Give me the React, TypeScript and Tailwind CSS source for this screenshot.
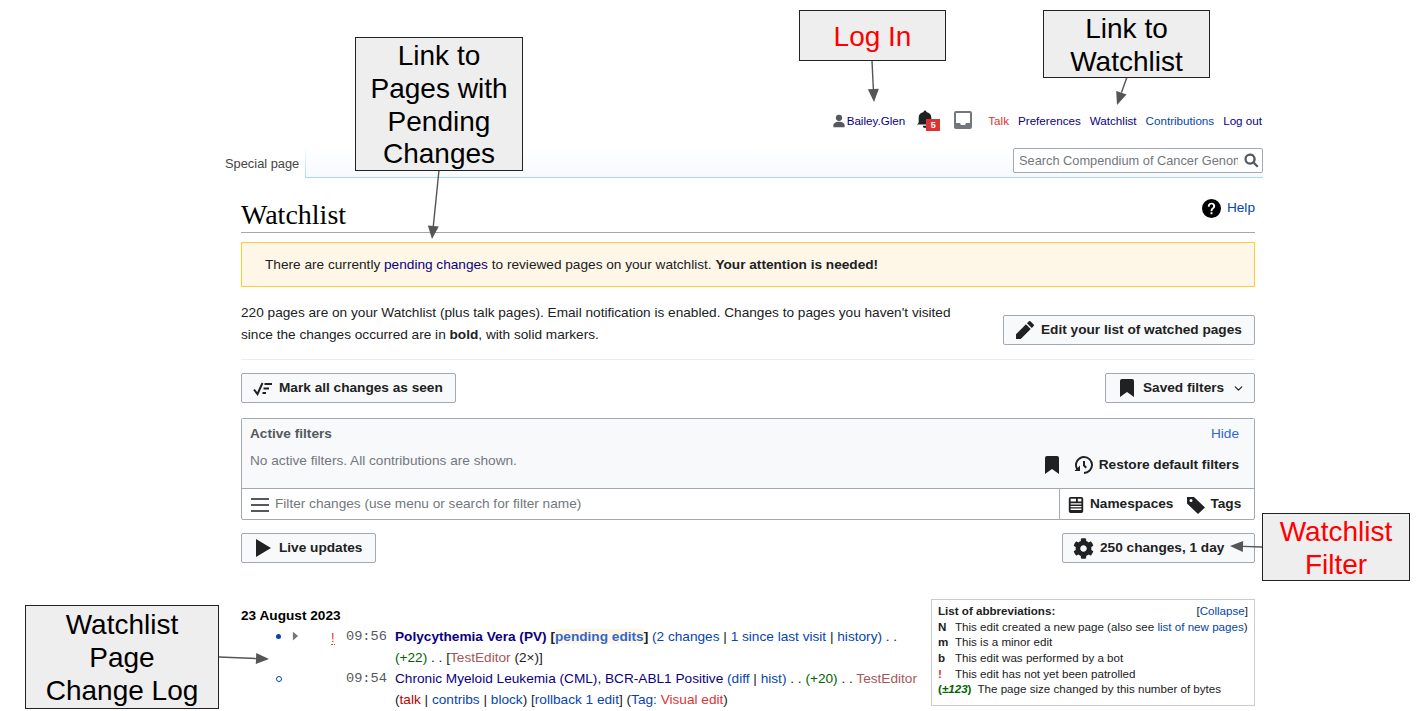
import React from "react";
import { FaCog } from "react-icons/fa";
import { ChevronDown } from "lucide-react";

const Btn = ({ icon, label, className = "" }: { icon: React.ReactNode; label: string; className?: string }) => (
  <div className={`flex h-[30px] items-center rounded-[2px] border border-[#a2a9b1] bg-[#f8f9fa] text-[13.65px] font-bold text-[#202122] ${className}`}>
    {icon}
    <span>{label}</span>
  </div>
);

const Bookmark = ({ c = "" }: { c?: string }) => (
  <svg viewBox="0 0 20 20" className={`h-[20px] w-[20px] fill-[#202122] ${c}`}>
    <path d="M5 1a2 2 0 0 0-2 2v16l7-5 7 5V3a2 2 0 0 0-2-2z" />
  </svg>
);

const Abbr = ({ k, red, children }: { k: string; red?: boolean; children: React.ReactNode }) => (
  <div className="flex h-[15.7px] items-center">
    <span className={`w-[17px] font-bold ${red ? "text-[#dd3333]" : "text-[#202122]"}`}>{k}</span>
    <span>{children}</span>
  </div>
);

const Box = ({ x, y, w, h, red, children }: { x: string; y: string; w: string; h: string; red?: boolean; children: React.ReactNode }) => (
  <div className={`absolute ${x} ${y} ${w} ${h} flex items-center justify-center border border-[#222222] bg-[#eeeeee] pt-[3px] text-center text-[28px] leading-[32.8px] ${red ? "text-[#ff0000]" : "text-black"}`}>
    <div>{children}</div>
  </div>
);

const Arrow = ({ x1, y1, x2, y2 }: { x1: number; y1: number; x2: number; y2: number }) => {
  const a = Math.atan2(y2 - y1, x2 - x1);
  const L = 13, W = 5.5;
  const bx = x2 - L * Math.cos(a), by = y2 - L * Math.sin(a);
  const px = -Math.sin(a) * W, py = Math.cos(a) * W;
  return (
    <g>
      <line x1={x1} y1={y1} x2={bx} y2={by} stroke="#555555" strokeWidth="1.4" />
      <polygon points={`${x2},${y2} ${bx + px},${by + py} ${bx - px},${by - py}`} fill="#555555" />
    </g>
  );
};

const Sep = () => <span className="text-[#202122]"> | </span>;

export default function App() {
  return (
    <div className="relative h-[711px] w-[1416px] overflow-hidden bg-white font-['Liberation_Sans',sans-serif] text-[#202122]">
      {/* personal tools */}
      <div className="flex h-[146px] items-start justify-end pr-[154px] pt-[109px] text-[11.65px] leading-[24px]">
        <div className="flex items-center text-[#0b0080]">
          <svg viewBox="0 0 20 20" className="mr-[1px] h-[14px] w-[14px] fill-[#54595d]">
            <circle cx="10" cy="5.500" r="4.500" />
            <path d="M10 11c-5.900 0-8 3-8 5v3h16v-3c0-2-2.100-5-8-5z" />
          </svg>
          Bailey.Glen
        </div>
        <div className="relative ml-[13px] h-[24px] w-[24px]">
          <svg viewBox="0 0 20 20" className="absolute left-[-2px] top-[1px] h-[18px] w-[18px] fill-[#202122]">
            <path d="M17 13V8c0-3-2.500-5.200-5.500-5.800V2a1.500 1.500 0 0 0-3 0v.2C5.500 2.800 3 5 3 8v5c0 1.500-1 2.500-2 3h18c-1-.5-2-1.500-2-3zM10 20a2.500 2.500 0 0 0 2.500-2.500h-5A2.500 2.500 0 0 0 10 20z" />
          </svg>
          <span className="absolute left-[8px] top-[10px] h-[12px] w-[14px] bg-[#dd3333] text-center text-[9px] font-bold leading-[12px] text-white">5</span>
        </div>
        <svg viewBox="0 0 20 20" className="ml-[11px] mt-[1px] h-[20px] w-[20px] fill-[#72777d]">
          <path fillRule="evenodd" d="M3 1a2 2 0 0 0-2 2v14a2 2 0 0 0 2 2h14a2 2 0 0 0 2-2V3a2 2 0 0 0-2-2zm0 2h14v10h-4l-1 2H8l-1-2H3z" />
        </svg>
        <span className="ml-[15px] text-[#dd3333]">Talk</span>
        <span className="ml-[9px] text-[#0b0080]">Preferences</span>
        <span className="ml-[9px] text-[#0b0080]">Watchlist</span>
        <span className="ml-[9px] text-[#0645ad]">Contributions</span>
        <span className="ml-[9px] text-[#0b0080]">Log out</span>
      </div>

      {/* tab bar */}
      <div className="ml-[225px] flex h-[32px] w-[1038px] items-stretch">
        <div className="w-[80px] pt-[10px] text-[12.85px] leading-[15px] text-[#444444]">Special page</div>
        <div className="w-[1px] bg-gradient-to-b from-white to-[#a7d7f9]" />
        <div className="flex flex-1 justify-end border-b border-[#a7d7f9] bg-gradient-to-b from-white to-[#f7fafc] pt-[2px]">
          <div className="flex h-[25px] w-[250px] items-center justify-between rounded-[2px] border border-[#a2a9b1] bg-white pl-[5px] pr-[3px] text-[12.8px] text-[#72777d]">
            <span className="w-[219px] overflow-hidden whitespace-nowrap">Search Compendium of Cancer Genome</span>
            <svg viewBox="0 0 20 20" className="h-[15px] w-[15px] fill-[#54595d]">
              <path fillRule="evenodd" d="M12.200 14.400a7.500 7.500 0 1 1 2.200-2.200l5 5-2.200 2.200zM3.500 8a4.500 4.500 0 1 0 9 0 4.500 4.500 0 0 0-9 0z" />
            </svg>
          </div>
        </div>
      </div>

      {/* content */}
      <div className="ml-[241px] w-[1014px]">
        <div className="flex h-[55px] justify-between border-b border-[#a2a9b1]">
          <h1 className="pt-[20px] font-['Liberation_Serif',serif] text-[28px] leading-[34px] text-black">Watchlist</h1>
          <div className="mt-[20px] flex h-[20px] items-center text-[13.65px] text-[#0645ad]">
            <svg viewBox="0 0 20 20" className="mr-[6px] h-[19px] w-[19px] fill-black">
              <path d="M10 0a10 10 0 1 0 10 10A10 10 0 0 0 10 0zm1 16H9v-2h2zm2.710-7.600a2.640 2.640 0 0 1-.33.74 3.160 3.160 0 0 1-.48.55l-.54.48c-.21.18-.41.35-.58.52a2.540 2.540 0 0 0-.47.56A2.300 2.300 0 0 0 11 12a3.790 3.790 0 0 0-.11 1H9.080a8.900 8.900 0 0 1 .07-1.250 3.280 3.280 0 0 1 .25-.9 2.790 2.790 0 0 1 .41-.67 4 4 0 0 1 .58-.58c.17-.16.34-.3.51-.44a3 3 0 0 0 .43-.44 1.830 1.830 0 0 0 .3-.55 2 2 0 0 0 .11-.72 2.060 2.060 0 0 0-.17-.86 1.710 1.710 0 0 0-1-.9 1.700 1.700 0 0 0-.5-.1 1.770 1.770 0 0 0-1.530.68 3 3 0 0 0-.5 1.820H6.160a4.740 4.740 0 0 1 .28-1.680 3.560 3.560 0 0 1 .8-1.290 3.880 3.880 0 0 1 1.280-.83A4.590 4.590 0 0 1 10.180 4a4.440 4.440 0 0 1 1.440.23 3.510 3.510 0 0 1 1.150.65 3.080 3.080 0 0 1 .78 1.060 3.540 3.540 0 0 1 .29 1.450 3.390 3.390 0 0 1-.12 1.010z" />
            </svg>
            Help
          </div>
        </div>

        <div className="mt-[9px] flex h-[45px] items-center border border-[#ffcc33] bg-[#fef6e7] pl-[23px] pt-[1px] text-[13.65px] text-[#202122]">
          <span>
            There are currently <span className="text-[#0b0080]">pending changes</span> to reviewed pages on your watchlist. <b>Your attention is needed!</b>
          </span>
        </div>

        <div className="flex h-[73px] items-start justify-between border-b border-[#eaecf0]">
          <p className="mt-[15px] w-[730px] text-[13.65px] leading-[22px]">
            220 pages are on your Watchlist (plus talk pages). Email notification is enabled. Changes to pages you haven't visited since the changes occurred are in <b>bold</b>, with solid markers.
          </p>
          <Btn
            className="mt-[28px] w-[252px] pl-[11px]"
            label="Edit your list of watched pages"
            icon={
              <svg viewBox="0 0 20 20" className="mr-[6px] h-[20px] w-[20px] fill-[#202122]">
                <path d="M16.770 8l1.940-2a1 1 0 0 0 0-1.410l-3.340-3.300a1 1 0 0 0-1.410 0L12 3.230zM1 14.250V19h4.750l9.960-9.960-4.750-4.750z" />
              </svg>
            }
          />
        </div>

        <div className="mt-[13px] flex justify-between">
          <Btn
            className="w-[215px] pl-[11px]"
            label="Mark all changes as seen"
            icon={
              <svg viewBox="0 0 20 20" className="mr-[6px] h-[20px] w-[20px] fill-none stroke-[#202122]" strokeWidth="2">
                <path d="M1 11.500l3.500 4.500L9.500 5" />
                <path d="M11.500 6h7.500M10.500 10.500h5.500M9.500 15h3.500" />
              </svg>
            }
          />
          <Btn className="w-[150px] pl-[11px]" label="Saved filters" icon={<Bookmark c="mr-[6px]" />} />
        </div>
        <div className="relative">
          <ChevronDown className="absolute right-[10px] top-[-21px] h-[13px] w-[13px] text-[#202122]" strokeWidth={2.2} />
        </div>

        <div className="mt-[15px] rounded-[2px] border border-[#a2a9b1]">
          <div className="relative h-[70px] border-b border-[#a2a9b1] bg-[#f8f9fa] pl-[8px] pt-[7px]">
            <div className="text-[13.65px] font-bold leading-[16px] text-[#54595d]">Active filters</div>
            <div className="mt-[11px] text-[13.65px] leading-[16px] text-[#72777d]">No active filters. All contributions are shown.</div>
            <div className="absolute right-[15px] top-[7px] text-[13.65px] leading-[16px] text-[#36c]">Hide</div>
            <div className="absolute bottom-[13px] right-[15px] flex items-center text-[13.65px] font-bold text-[#202122]">
              <Bookmark c="mr-[12px]" />
              <svg viewBox="0 0 20 20" className="mr-[5px] h-[20px] w-[20px] fill-[#202122]">
                <path d="M9 6v5h.06l2.480 2.470 1.410-1.410L11 10.110V6z" />
                <path d="M10 1a9 9 0 0 0-7.850 13.350L.5 16H6v-5.500l-2.380 2.380A7 7 0 1 1 10 17v2a9 9 0 0 0 0-18z" />
              </svg>
              Restore default filters
            </div>
          </div>
          <div className="flex h-[30px] items-stretch">
            <div className="flex flex-1 items-center pl-[8px] pt-[1px] text-[13.65px] text-[#72777d]">
              <svg viewBox="0 0 20 20" className="mr-[5px] h-[20px] w-[20px] fill-[#54595d]">
                <path d="M1 3h18v2H1zM1 9h18v2H1zM1 15h18v2H1z" />
              </svg>
              Filter changes (use menu or search for filter name)
            </div>
            <div className="flex w-[195px] items-center border-l border-[#a2a9b1] pl-[7px] pt-[1px] text-[13.65px] font-bold">
              <svg viewBox="0 0 20 20" className="mr-[5px] h-[18px] w-[18px] fill-[#202122]">
                <path fillRule="evenodd" d="M4 1h12a2 2 0 0 1 2 2v14a2 2 0 0 1-2 2H4a2 2 0 0 1-2-2V3a2 2 0 0 1 2-2zm0 2v3h6V3zm8 0v3h4V3zM4 8v1.500h12V8zm0 3v1.500h12V11zm0 3v1.500h12V14z" />
              </svg>
              <span>Namespaces</span>
              <svg viewBox="0 0 20 20" className="ml-[13px] mr-[4px] h-[20px] w-[20px] fill-[#202122]">
                <path fillRule="evenodd" d="M1 2h7l11 10.500L12 19 1 8.500zm4 2a1.500 1.500 0 1 0 0 3 1.500 1.500 0 0 0 0-3z" />
              </svg>
              Tags
            </div>
          </div>
        </div>

        <div className="mt-[13px] flex justify-between">
          <Btn
            className="w-[135px] pl-[10px]"
            label="Live updates"
            icon={
              <svg viewBox="0 0 20 20" className="mr-[7px] h-[20px] w-[20px] fill-[#202122]">
                <path d="M4 1v18l15-9z" />
              </svg>
            }
          />
          <Btn
            className="w-[193px] pl-[10px]"
            label="250 changes, 1 day"
            icon={<FaCog className="mr-[6px] h-[21px] w-[21px] text-[#202122]" />}
          />
        </div>

        <div className="relative">
          <div className="pt-[44px] text-[13.65px] leading-[18px]">
            <div className="font-bold text-black">23 August 2023</div>
            <div className="mt-[1px] flex leading-[21px]">
              <div className="relative w-[154px] shrink-0">
                <span className="absolute left-[35px] top-[8px] h-[5px] w-[5px] rounded-full bg-[#0645ad]" />
                <svg viewBox="0 0 8 10" className="absolute left-[51px] top-[5px] h-[10px] w-[7px] fill-[#72777d]">
                  <path d="M1 0l6 5-6 5z" />
                </svg>
                <span className="absolute left-[90px] top-[1px] h-[18px] border-b border-dotted border-[#dd3333] text-[13px] text-[#dd3333]">!</span>
                <span className="absolute left-[105px] top-0 font-['Liberation_Mono',monospace] text-[13.65px] text-[#54595d]">09:56</span>
              </div>
              <div className="w-[530px]">
                <b className="text-[#0b0080]">Polycythemia Vera (PV)</b> <b>[<span className="bg-[#fef6e7] text-[#36c]">pending edits</span>]</b> <span className="text-[#0645ad]">(2 changes<Sep />1 since last visit<Sep />history)</span> . .<br />
                <span className="text-[#006400]">(+22)</span> . . [<span className="text-[#a55858]">TestEditor</span> (2×)]
              </div>
            </div>
            <div className="flex leading-[21px]">
              <div className="relative w-[154px] shrink-0">
                <span className="absolute left-[35px] top-[8px] h-[6px] w-[6px] rounded-full border border-[#0645ad]" />
                <span className="absolute left-[105px] top-0 font-['Liberation_Mono',monospace] text-[13.65px] text-[#54595d]">09:54</span>
              </div>
              <div className="w-[530px]">
                <span className="text-[#0b0080]">Chronic Myeloid Leukemia (CML), BCR-ABL1 Positive</span> <span className="text-[#0645ad]">(diff<Sep />hist)</span> . . <span className="text-[#006400]">(+20)</span> . . <span className="text-[#a55858]">TestEditor</span><br />
                (<span className="text-[#ba0000]">talk</span><Sep /><span className="text-[#0645ad]">contribs</span><Sep /><span className="text-[#0645ad]">block</span>) [<span className="text-[#0645ad]">rollback 1 edit</span>] (<span className="text-[#0645ad]">Tag:</span> <span className="text-[#dd3333]">Visual edit</span>)
              </div>
            </div>
          </div>

          <div className="absolute left-[690px] top-[36px] h-[107px] w-[324px] border border-[#c8ccd1] px-[6px] pt-[3px] text-[11.6px] leading-[15.7px] text-[#202122]">
            <div className="flex justify-between">
              <b>List of abbreviations:</b>
              <span>[<span className="text-[#0645ad]">Collapse</span>]</span>
            </div>
            <Abbr k="N">This edit created a new page (also see <span className="text-[#0645ad]">list of new pages</span>)</Abbr>
            <Abbr k="m">This is a minor edit</Abbr>
            <Abbr k="b">This edit was performed by a bot</Abbr>
            <Abbr k="!" red>This edit has not yet been patrolled</Abbr>
            <div className="flex h-[15.7px] items-center">
              <b className="mr-[6px] text-[#006400]">(<i>±123</i>)</b>
              <span>The page size changed by this number of bytes</span>
            </div>
          </div>
        </div>
      </div>

      {/* annotations */}
      <svg className="pointer-events-none absolute left-0 top-0" width="1416" height="711">
        <Arrow x1={439} y1={170} x2={432} y2={239} />
        <Arrow x1={872} y1={61} x2={874} y2={102} />
        <Arrow x1={1127} y1={77} x2={1117} y2={105} />
        <Arrow x1={1262} y1={547} x2={1230} y2={546} />
        <Arrow x1={219} y1={657} x2={269} y2={659} />
      </svg>
      <Box x="left-[355px]" y="top-[37px]" w="w-[168px]" h="h-[134px]">Link to<br />Pages with<br />Pending<br />Changes</Box>
      <Box x="left-[799px]" y="top-[10px]" w="w-[147px]" h="h-[51px]" red>Log In</Box>
      <Box x="left-[1043px]" y="top-[10px]" w="w-[167px]" h="h-[68px]">Link to<br />Watchlist</Box>
      <Box x="left-[1262px]" y="top-[513px]" w="w-[148px]" h="h-[68px]" red>Watchlist<br />Filter</Box>
      <Box x="left-[25px]" y="top-[605px]" w="w-[194px]" h="h-[104px]">Watchlist<br />Page<br />Change Log</Box>
    </div>
  );
}
